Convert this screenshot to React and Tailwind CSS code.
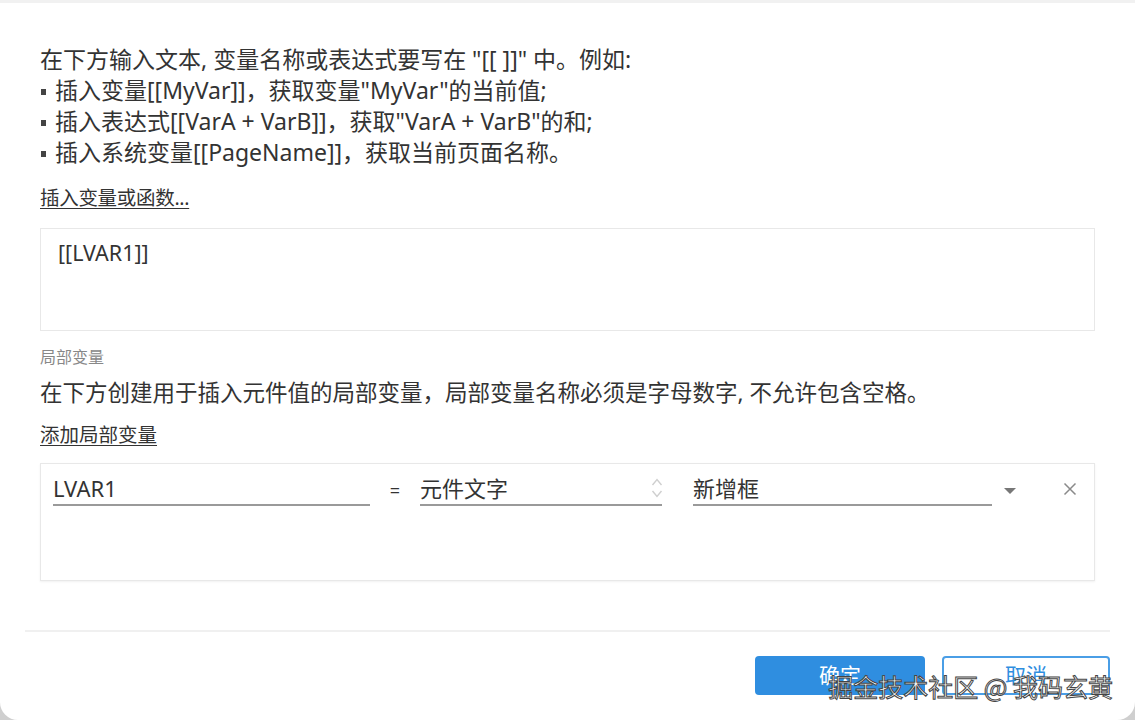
import React from "react";

const font = { fontFamily: '"Noto Sans", "Noto Sans CJK SC", sans-serif' };

function Bullet() {
  return <span className="inline-block w-[5px] h-[6px] bg-[#444] mr-[9px] ml-[1px] align-[4px]" />;
}

export default function App() {
  return (
    <div className="w-[1135px] h-[720px] bg-[#cfcfcf] overflow-hidden" style={font}>
      <div className="w-[1135px] h-[720px] bg-white rounded-b-[18px] border-t-[3px] border-[#f1f1f1] flex flex-col text-[#333]">
        <div className="px-[40px] pt-[41px] flex flex-col">
          <div className="text-[23px] leading-[31px]">
            <div>在下方输入文本, 变量名称或表达式要写在 "[[ ]]" 中。例如:</div>
            <div><Bullet />插入变量[[MyVar]]，获取变量"MyVar"的当前值;</div>
            <div><Bullet />插入表达式[[VarA + VarB]]，获取"VarA + VarB"的和;</div>
            <div><Bullet />插入系统变量[[PageName]]，获取当前页面名称。</div>
          </div>
          <div className="mt-[18px] text-[19.5px] leading-[24px] tracking-[-0.3px] underline underline-offset-[3px]">插入变量或函数...</div>
          <div className="mt-[18px] h-[103px] border border-[#e8e8e8] px-[17px] pt-[10px] text-[21.5px] leading-[28px]">
            [[LVAR1]]
          </div>
          <div className="mt-[16px] text-[16px] leading-[20px] text-[#888]">局部变量</div>
          <div className="mt-[11px] text-[22.5px] leading-[30px]">在下方创建用于插入元件值的局部变量，局部变量名称必须是字母数字, 不允许包含空格。</div>
          <div className="mt-[15px] text-[19.5px] leading-[24px] underline underline-offset-[3px]">添加局部变量</div>
          <div className="mt-[16px] h-[118px] border border-[#e8e8e8] shadow-[0_1px_2px_rgba(0,0,0,0.06)] pl-[12px] pt-[8px]">
            <div className="flex items-start">
              <div className="shrink-0 w-[317px] h-[34px] border-b-2 border-[#9a9a9a] text-[22px] leading-[32px]">LVAR1</div>
              <div className="shrink-0 w-[50px] text-center text-[18px] leading-[36px]">=</div>
              <div className="shrink-0 w-[242px] h-[34px] border-b-2 border-[#9a9a9a] text-[22px] leading-[32px] flex justify-between">
                <span>元件文字</span>
                <svg width="12" height="24" viewBox="0 0 12 24" className="mt-[4px] mr-[-1px]">
                  <path d="M1.5 9 L6 3.5 L10.5 9" fill="none" stroke="#cfcfcf" strokeWidth="1.4" />
                  <path d="M1.5 15 L6 20.5 L10.5 15" fill="none" stroke="#cfcfcf" strokeWidth="1.4" />
                </svg>
              </div>
              <div className="shrink-0 w-[31px]" />
              <div className="shrink-0 w-[299px] h-[34px] border-b-2 border-[#9a9a9a] text-[22px] leading-[32px]">新增框</div>
              <div className="shrink-0 w-[36px] flex justify-center pt-[15px]">
                <svg width="14" height="8" viewBox="0 0 14 8">
                  <path d="M1 1 L13 1 L7 7 Z" fill="#777" />
                </svg>
              </div>
              <div className="shrink-0 w-[40px] ml-[22px] flex justify-center pt-[10px]">
                <svg width="14" height="14" viewBox="0 0 14 14">
                  <path d="M1.5 1.5 L12.5 12.5 M12.5 1.5 L1.5 12.5" stroke="#8a8a8a" strokeWidth="1.5" />
                </svg>
              </div>
            </div>
          </div>
        </div>
        <div className="mx-[25px] mt-[49px] h-[2px] bg-[#f0f0f0]" />
        <div className="relative flex justify-end gap-[17px] pr-[25px] mt-[24px]">
          <button className="w-[170px] h-[39px] rounded-[4px] bg-[#2f8ee0] text-white text-[21px]">确定</button>
          <button className="w-[168px] h-[39px] rounded-[4px] border-2 border-[#4a9ee6] text-[#2f8ee0] text-[21px] bg-white">取消</button>
          <div
            className="absolute right-[22px] top-[14px] text-[25px] leading-[32px] text-white"
            style={{ WebkitTextStroke: "1px #444", fontFamily: '"Noto Sans CJK SC", sans-serif' }}
          >
            掘金技术社区 @ 我码玄黄
          </div>
        </div>
      </div>
    </div>
  );
}
